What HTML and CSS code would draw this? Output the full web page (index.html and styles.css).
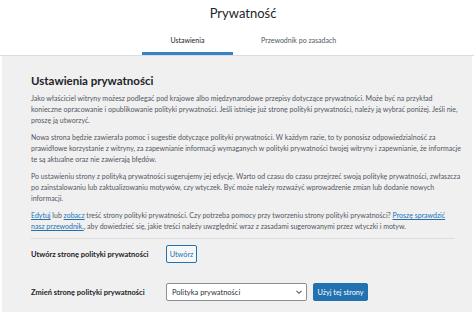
FILE: index.html
```html
<!DOCTYPE html>
<html lang="pl">
<head>
  <meta charset="UTF-8" />
  <meta name="viewport" content="width=device-width, initial-scale=1.0"/>
  <title>Prywatność</title>
  <link rel="stylesheet" href="styles.css">
</head>
<body>

<div class="privacy-header">
  <h1>Prywatność</h1>
  <nav class="tabs">
    <a href="#" class="tab active">Ustawienia</a>
    <a href="#" class="tab">Przewodnik po zasadach</a>
  </nav>
</div>

<div class="privacy-body">
  <div class="privacy-inner">
    <h2>Ustawienia prywatności</h2>
    <p>Jako właściciel witryny możesz podlegać pod krajowe albo międzynarodowe przepisy dotyczące prywatności. Może być na przykład konieczne opracowanie i opublikowanie polityki prywatności. Jeśli istnieje już stronę polityki prywatności, należy ją wybrać poniżej. Jeśli nie, proszę ją utworzyć.</p>
    <p>Nowa strona będzie zawierała pomoc i sugestie dotyczące polityki prywatności. W każdym razie, to ty ponosisz odpowiedzialność za prawidłowe korzystanie z witryny, za zapewnianie informacji wymaganych w polityki prywatności twojej witryny i zapewnianie, że informacje te są aktualne oraz nie zawierają błędów.</p>
    <p>Po ustawieniu strony z polityką prywatności sugerujemy jej edycję. Warto od czasu do czasu przejrzeć swoją politykę prywatności, zwłaszcza po zainstalowaniu lub zaktualizowaniu motywów, czy wtyczek. Być może należy rozważyć wprowadzenie zmian lub dodanie nowych informacji.</p>
    <p><a href="#">Edytuj</a> lub <a href="#">zobacz</a> treść strony polityki prywatności. Czy potrzeba pomocy przy tworzeniu strony polityki prywatności? <a href="#">Proszę sprawdzić nasz&nbsp;przewodnik.</a>, aby dowiedzieć się, jakie treści należy uwzględnić wraz z zasadami sugerowanymi przez wtyczki i motyw.</p>
    <hr>
    <div class="setting-row first">
      <label class="setting-label">Utwórz stronę polityki prywatności</label>
      <button type="button" class="btn-secondary">Utwórz</button>
    </div>
    <div class="setting-row">
      <label class="setting-label" for="page">Zmień stronę polityki prywatności</label>
      <div class="select-wrap">
        <select id="page">
          <option>Polityka prywatności</option>
        </select>
        <svg class="chevron" width="8" height="8" viewBox="0 0 8 8"><path d="M1.5 2.8 L4 5.3 L6.5 2.8" fill="none" stroke="#50575e" stroke-width="1.1"/></svg>
      </div>
      <button type="button" class="btn-primary">Użyj tej strony</button>
    </div>
  </div>
</div>

</body>
</html>
```

FILE: styles.css
```css
body { margin: 0; background: #fff; font-family: Lato, "Open Sans", Arial, sans-serif; color: #50575e; }
.privacy-header { background: #fff; border-bottom: 1px solid #dcdcde; text-align: center; padding-left: 12px; }
.privacy-header h1 {
  margin: 0; padding-top: 4px; font-size: 13px; font-weight: 400; color: #1d2327; line-height: 18px;
}
.tabs { display: inline-grid; grid-template-columns: 1fr 1fr; margin-top: 9px; }
.tab {
  display: block; margin: 0 10px; padding: 4px 8px 7px; font-size: 7px; line-height: 10px;
  color: #50575e; text-decoration: none; border-bottom: 3px solid transparent;
}
.tab.active { color: #1d2327; border-bottom-color: #3582c4; }
.privacy-body { background: #f0f0f1; margin: 0 2px; padding: 18px 0 11px; }
.privacy-inner { margin: 0 10px 0 29px; }
h2 { margin: 0 0 5px; font-size: 11.5px; font-weight: 700; color: #1d2327; line-height: 14px; }
p { margin: 0 0 6px; font-size: 7px; line-height: 11px; }
a { color: #2271b1; }
hr { border: 0; border-top: 1px solid #dcdcde; margin: 4px 7px 0 0; }
.setting-row { display: flex; align-items: center; margin-top: 20px; }
.setting-row.first { margin-top: 6px; }
.setting-label { width: 135px; font-size: 7.5px; font-weight: 700; color: #1d2327; }
.btn-secondary, .btn-primary {
  font-family: inherit; font-size: 7.3px; height: 18px; padding: 0; border-radius: 2px; cursor: pointer;
}
.btn-secondary { width: 31px; background: #f6f7f7; color: #2271b1; border: 1px solid #2271b1; }
.select-wrap { position: relative; width: 141px; }
select {
  display: block; width: 100%; height: 18px; appearance: none; background: #fff; border: 1px solid #8c8f94;
  border-radius: 2px; font-family: inherit; font-size: 7.5px; color: #2c3338; padding: 0 5px;
}
.chevron { position: absolute; right: 4px; top: 5px; }
.btn-primary { width: 55px; margin-left: 6px; background: #2271b1; color: #fff; border: 1px solid #2271b1; }
```
